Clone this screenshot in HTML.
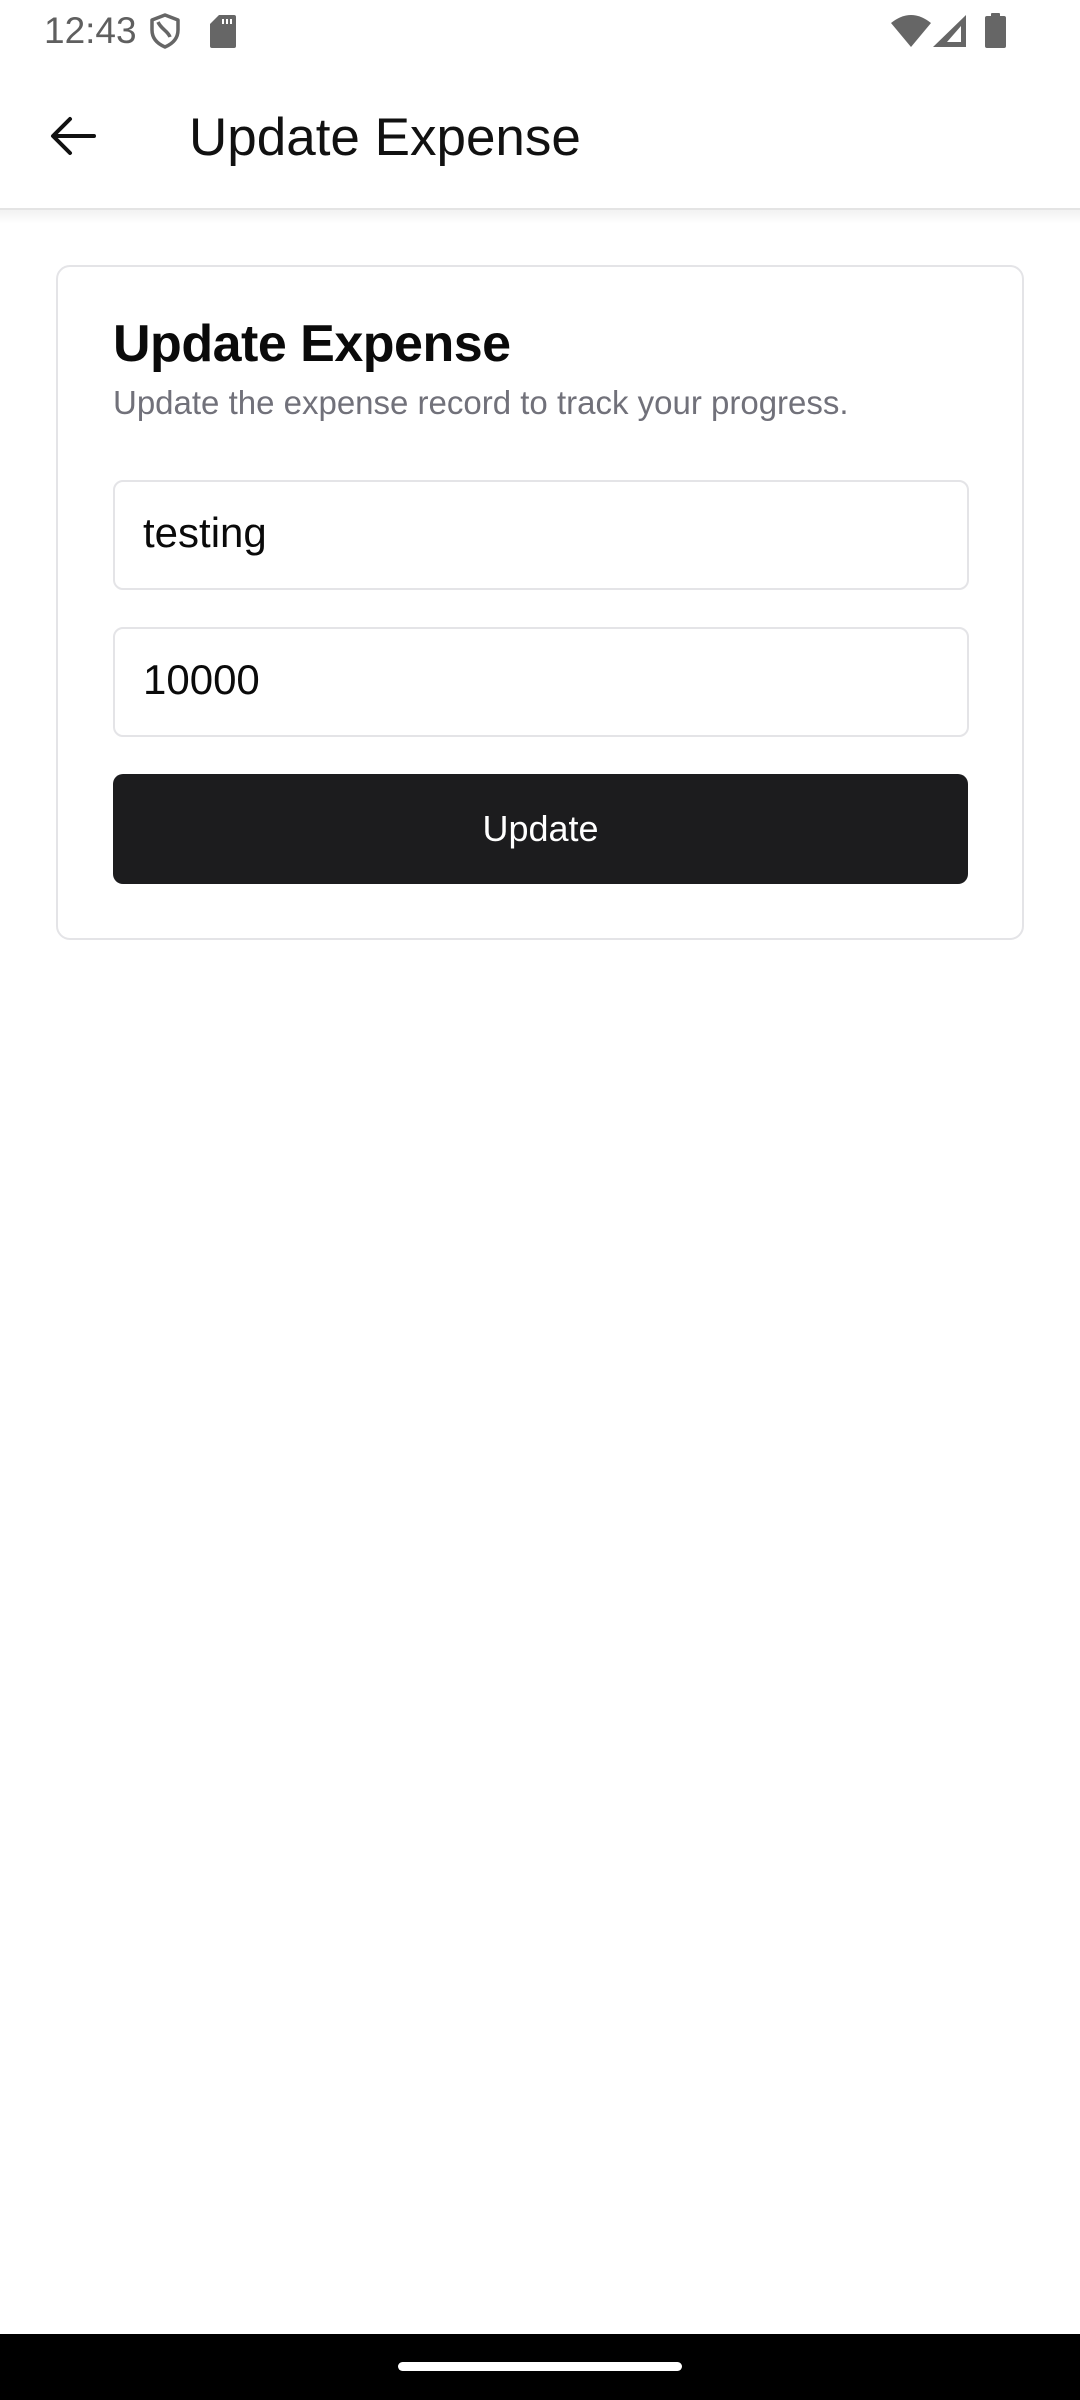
<!DOCTYPE html>
<html><head><meta charset="utf-8"><style>
*{margin:0;padding:0;box-sizing:border-box}
body{width:1080px;height:2400px;background:#fff;font-family:"Liberation Sans",Roboto,sans-serif;position:relative;overflow:hidden}
.abs{position:absolute}
</style></head><body>
<div class="abs" style="left:44px;top:11px;font-size:37px;color:#5f5f5f;line-height:40px">12:43</div>
<svg class="abs" style="left:148px;top:13px" width="34" height="36" viewBox="0 0 34 36"><path d="M17 2 L30 7 V17 C30 26 24 31 17 34 C10 31 4 26 4 17 V7 Z" fill="none" stroke="#666" stroke-width="3.5" stroke-linejoin="round"/><path d="M10 9 C13 16 20 18 22 24" fill="none" stroke="#666" stroke-width="3.5"/></svg>
<svg class="abs" style="left:209px;top:15px" width="28" height="33" viewBox="0 0 28 33"><path d="M10 0 H25 Q27 0 27 2 V31 Q27 33 25 33 H3 Q1 33 1 31 V9 Z" fill="#666"/><rect x="13" y="4" width="2" height="5" fill="#fff"/><rect x="17" y="4" width="2" height="5" fill="#fff"/><rect x="21" y="4" width="2" height="5" fill="#fff"/></svg>
<svg class="abs" style="left:890px;top:13px" width="42" height="34" viewBox="0 0 42 34"><path d="M1 10 Q21 -6 41 10 L21 34 Z" fill="#666"/></svg>
<svg class="abs" style="left:932px;top:14px" width="36" height="34" viewBox="0 0 36 34"><path d="M34 1 V33 H1 Z" fill="#666"/><path d="M29 12 V28 H15 Z" fill="#fff"/></svg>
<svg class="abs" style="left:985px;top:13px" width="21" height="35" viewBox="0 0 21 35"><rect x="6" y="0" width="9" height="4" rx="1" fill="#666"/><rect x="0" y="3" width="21" height="32" rx="2" fill="#666"/></svg>

<svg class="abs" style="left:48px;top:114px" width="50" height="44" viewBox="0 0 50 44"><path d="M46 22 H6 M22 5 L5 22 L22 39" fill="none" stroke="#111" stroke-width="4" stroke-linecap="round" stroke-linejoin="round"/></svg>
<div class="abs" style="left:189px;top:106px;font-size:53px;color:#111;line-height:64px">Update Expense</div>
<div class="abs" style="left:0;top:208px;width:1080px;height:2px;background:#e4e4e4"></div>
<div class="abs" style="left:0;top:210px;width:1080px;height:14px;background:linear-gradient(#f2f2f2,#fff)"></div>

<div class="abs" style="left:56px;top:265px;width:968px;height:675px;border:2px solid #e4e4e7;border-radius:14px;background:#fff"></div>
<div class="abs" style="left:113px;top:313px;font-size:52px;font-weight:bold;color:#0a0a0a;line-height:62px;letter-spacing:-0.5px">Update Expense</div>
<div class="abs" style="left:113px;top:383px;font-size:33px;color:#71717a;line-height:40px">Update the expense record to track your progress.</div>

<div class="abs" style="left:113px;top:480px;width:856px;height:110px;border:2px solid #e4e4e7;border-radius:10px"></div>
<div class="abs" style="left:143px;top:508px;font-size:42px;color:#0a0a0a;line-height:50px">testing</div>
<div class="abs" style="left:113px;top:627px;width:856px;height:110px;border:2px solid #e4e4e7;border-radius:10px"></div>
<div class="abs" style="left:143px;top:655px;font-size:42px;color:#0a0a0a;line-height:50px">10000</div>
<div class="abs" style="left:113px;top:774px;width:855px;height:110px;background:#1c1c1e;border-radius:10px;color:#fff;font-size:36px;text-align:center;line-height:110px">Update</div>

<div class="abs" style="left:0;top:2334px;width:1080px;height:66px;background:#000"></div>
<div class="abs" style="left:398px;top:2362px;width:284px;height:9px;border-radius:5px;background:#fff"></div>
</body></html>
